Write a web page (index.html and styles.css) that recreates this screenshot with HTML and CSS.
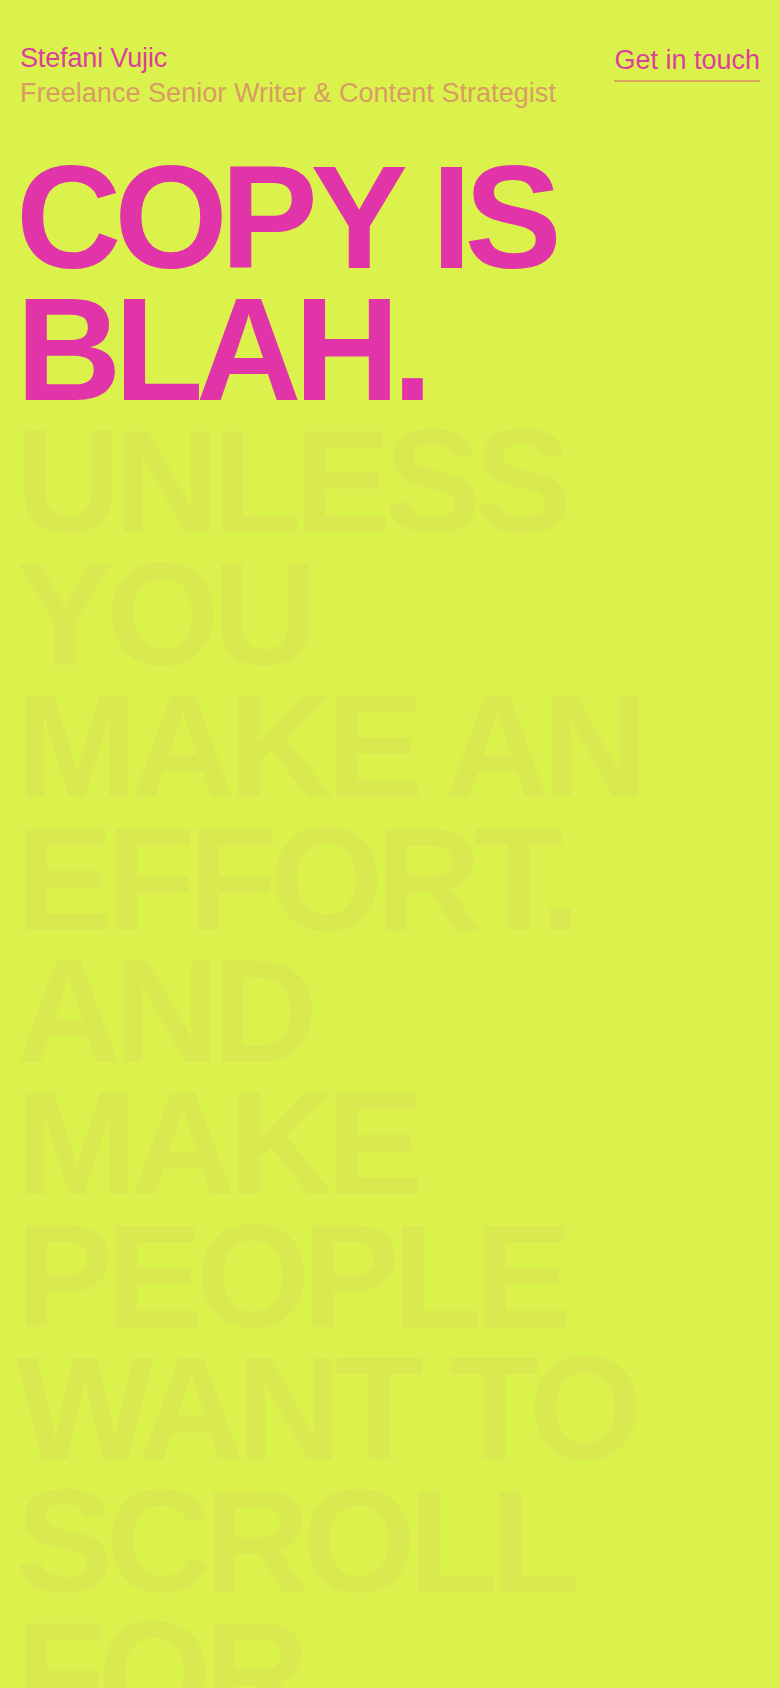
FILE: index.html
```html
<!DOCTYPE html>
<html lang="en">
<head>
<meta charset="utf-8">
<title>Stefani Vujic</title>
<link rel="stylesheet" href="styles.css">
</head>
<body>
<div class="page">
  <header class="header">
    <div class="identity">
      <div class="name">Stefani Vujic</div>
      <div class="role">Freelance Senior Writer &amp; Content Strategist</div>
    </div>
    <a class="contact" href="#">Get in touch</a>
  </header>
  <h1 class="hero">
    <span class="hot">COPY IS<br>BLAH.</span><br>
    <span class="ghost">UNLESS<br>YOU<br>MAKE AN<br>EFFORT.<br>AND<br>MAKE<br>PEOPLE<br>WANT TO<br>SCROLL<br>FOR</span>
  </h1>
</div>
</body>
</html>
```

FILE: styles.css
```css
html, body {
  margin: 0;
  padding: 0;
  background: #dcf24c;
}
body {
  font-family: "Liberation Sans", Arial, Helvetica, sans-serif;
  overflow: hidden;
  height: 1688px;
}
.page {
  padding: 41px 20px 0 20px;
}
.header {
  display: flex;
  justify-content: space-between;
  align-items: flex-start;
}
.identity {
  display: flex;
  flex-direction: column;
}
.name, .role, .contact {
  font-size: 27px;
  line-height: 35px;
}
.name {
  color: #db3f9c;
  letter-spacing: -0.15px;
}
.role {
  color: #d99c63;
  letter-spacing: 0.05px;
}
.contact {
  color: #db3f9c;
  text-decoration: none;
  margin-top: 2px;
  padding-bottom: 2px;
  border-bottom: 2px solid #d9a85e;
}
.hero {
  margin: 40.5px 0 0 -4px;
  font-size: 146px;
  line-height: 132.4px;
  font-weight: 700;
  letter-spacing: -0.05em;
  white-space: nowrap;
}
.hot {
  color: #e034a8;
}
.ghost {
  color: #d9e94f;
}
```
